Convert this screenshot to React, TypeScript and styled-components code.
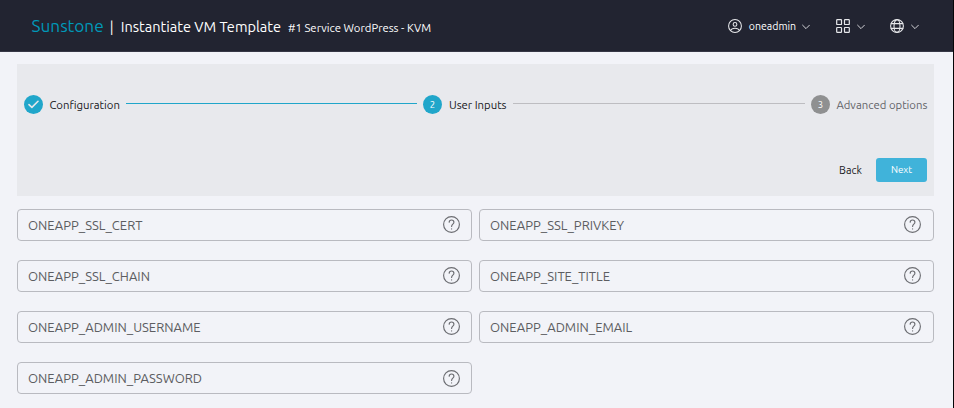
import React from "react";
import styled, { createGlobalStyle } from "styled-components";

const Global = createGlobalStyle`
  * { box-sizing: border-box; }
  body { margin: 0; background: #f2f3f8; font-family: Ubuntu, "Noto Sans", sans-serif; }
`;

const Page = styled.div`
  height: 408px;
  overflow: hidden;
  background: #f2f3f8;
  border-right: 1px solid #050507;
`;

const Header = styled.header`
  display: flex;
  align-items: center;
  justify-content: space-between;
  height: 52px;
  padding: 1px 34px 0 31.5px;
  background: #222431;
  border-bottom: 1px solid #373846;
`;

const Titles = styled.div`
  display: flex;
  align-items: baseline;
  padding-top: 1px;
`;

const Text = styled.span<{ $size: number; $color: string; $gap?: number; $drop?: number }>`
  display: block;
  font-size: ${(p) => p.$size}px;
  line-height: 1.3;
  color: ${(p) => p.$color};
  margin-left: ${(p) => p.$gap ?? 0}px;
  padding-top: ${(p) => p.$drop ?? 0}px;
  white-space: nowrap;
`;

const Divider = styled.span`
  width: 17px;
  padding-right: 1px;
  text-align: center;
  font-size: 14px;
  line-height: 1.3;
  color: #fff;
`;

const Actions = styled.nav`
  display: flex;
  align-items: center;
  gap: 25px;
`;

const Action = styled.div`
  display: flex;
  align-items: center;
  gap: 7px;
`;

const UserAction = styled(Action)`
  width: 82px;
  margin-right: 1px;
  justify-content: space-between;
  gap: 0;
`;

const Glyph = styled.svg`
  display: block;
  flex: none;
  fill: none;
  stroke: #e6e7ea;
  stroke-linecap: round;
  stroke-linejoin: round;
`;

const Arrow = styled(Glyph)`
  margin-top: 2px;
`;

const HelpGlyph = styled(Glyph)<{ $lift: number }>`
  stroke: #6c6d72;
  margin-bottom: ${(p) => p.$lift}px;
`;

const Panel = styled.section`
  height: 132px;
  margin: 12px 19px 13px 17px;
  padding: 30px 7px 14px;
  display: flex;
  flex-direction: column;
  justify-content: space-between;
  background: #e8e9ed;
`;

const Steps = styled.div`
  display: flex;
  align-items: center;
  height: 21px;
`;

const Step = styled.div<{ $width: number }>`
  display: flex;
  align-items: center;
  gap: 6.4px;
  flex: none;
  width: ${(p) => p.$width}px;
`;

const Dot = styled.div<{ $muted?: boolean }>`
  display: grid;
  place-items: center;
  flex: none;
  width: 19px;
  height: 19px;
  border-radius: 50%;
  background: ${(p) => (p.$muted ? "#8f9091" : "#20a6ca")};
`;

const Line = styled.div<{ $active?: boolean }>`
  flex: ${(p) => (p.$active ? "none" : 1)};
  width: 291px;
  height: 1px;
  margin: 0 6px 2px;
  background: ${(p) => (p.$active ? "#20a6ca" : "#bdbdc1")};
`;

const Buttons = styled.div`
  display: flex;
  justify-content: flex-end;
  align-items: center;
  gap: 14px;
`;

const Next = styled.button`
  display: grid;
  place-items: center;
  width: 51px;
  height: 24px;
  padding: 1px 0 0;
  border: 0;
  border-radius: 3px;
  background: #40b3da;
  font: inherit;
`;

const Fields = styled.div`
  display: grid;
  grid-template-columns: 455px 455px;
  gap: 19px 7px;
  padding-left: 17px;
`;

const Field = styled.div`
  display: flex;
  align-items: center;
  justify-content: space-between;
  height: 32px;
  padding: 0 11px 0 10px;
  border: 1px solid #b9bac0;
  border-radius: 4px;

  &:nth-child(even) {
    padding-right: 12px;
  }
`;

const Chevron = () => (
  <Arrow width="8" height="8" viewBox="0 0 8 8" strokeWidth="0.9">
    <path d="M0.6 2.2 4 5.6 7.4 2.2" />
  </Arrow>
);

const Help = ({ lift }: { lift: number }) => (
  <HelpGlyph $lift={lift} width="17" height="17" viewBox="0 0 17 17" strokeWidth="1.15">
    <circle cx="8.5" cy="8.5" r="7.9" />
    <path d="M6.2 6.2C6.2 3.3 10.9 3.3 10.9 6.2 10.9 8.2 8.6 8 8.6 10.4M8.6 12.8v.1" />
  </HelpGlyph>
);

const fields = [
  { name: "ONEAPP_SSL_CERT", lift: 1 },
  { name: "ONEAPP_SSL_PRIVKEY", lift: 1 },
  { name: "ONEAPP_SSL_CHAIN", lift: 1 },
  { name: "ONEAPP_SITE_TITLE", lift: 1 },
  { name: "ONEAPP_ADMIN_USERNAME", lift: 1 },
  { name: "ONEAPP_ADMIN_EMAIL", lift: 1 },
  { name: "ONEAPP_ADMIN_PASSWORD", lift: -1 },
];

export default function App() {
  return (
    <>
      <Global />
      <Page>
        <Header>
          <Titles>
            <Text $size={17.2} $color="#0098b8">Sunstone</Text>
            <Divider>|</Divider>
            <Text $size={14.55} $color="#fff">Instantiate VM Template</Text>
            <Text $size={11.33} $color="#fff" $gap={7}>#1 Service WordPress - KVM</Text>
          </Titles>
          <Actions>
            <UserAction>
              <Glyph width="14" height="14" viewBox="0 0 24 24" strokeWidth="1.8">
                <circle cx="12" cy="12" r="11" />
                <circle cx="12" cy="9.3" r="3.2" />
                <path d="M4.5 19.5C6.5 14.5 17.5 14.5 19.5 19.5" />
              </Glyph>
              <Text $size={10.55} $color="#fff" $gap={1} $drop={1}>oneadmin</Text>
              <Chevron />
            </UserAction>
            <Action>
              <Glyph width="14" height="14" viewBox="0 0 14 14" strokeWidth="1.2">
                <rect x=".7" y=".7" width="4.8" height="4.8" rx=".6" />
                <rect x="8.5" y=".7" width="4.8" height="4.8" rx=".6" />
                <rect x=".7" y="8.5" width="4.8" height="4.8" rx=".6" />
                <rect x="8.5" y="8.5" width="4.8" height="4.8" rx=".6" />
              </Glyph>
              <Chevron />
            </Action>
            <Action>
              <Glyph width="14" height="14" viewBox="0 0 14 14" strokeWidth="1.1">
                <circle cx="7" cy="7" r="6.4" />
                <ellipse cx="7" cy="7" rx="3" ry="6.4" />
                <path d="M1.2 4.6h11.6M1.2 9.4h11.6" />
              </Glyph>
              <Chevron />
            </Action>
          </Actions>
        </Header>
        <Panel>
          <Steps>
            <Step $width={96}>
              <Dot>
                <Glyph width="11" height="9" viewBox="0 0 11 9" strokeWidth="1.6">
                  <path d="M1 4.6 3.9 7.4 10 1.3" />
                </Glyph>
              </Dot>
              <Text $size={11.33} $color="#18181c" $drop={1}>Configuration</Text>
            </Step>
            <Line $active />
            <Step $width={84}>
              <Dot><Text $size={9.5} $color="#fff" $drop={1}>2</Text></Dot>
              <Text $size={11.33} $color="#18181c" $drop={1} $gap={0.5}>User Inputs</Text>
            </Step>
            <Line />
            <Step $width={116}>
              <Dot $muted><Text $size={9.5} $color="#fff" $drop={1}>3</Text></Dot>
              <Text $size={11.33} $color="#626368" $drop={1}>Advanced options</Text>
            </Step>
          </Steps>
          <Buttons>
            <Text $size={10.8} $color="#18181c">Back</Text>
            <Next><Text $size={9.8} $color="#fff">Next</Text></Next>
          </Buttons>
        </Panel>
        <Fields>
          {fields.map(({ name, lift }) => (
            <Field key={name}>
              <Text $size={13} $color="#5c5d61" $drop={1}>{name}</Text>
              <Help lift={lift} />
            </Field>
          ))}
        </Fields>
      </Page>
    </>
  );
}
